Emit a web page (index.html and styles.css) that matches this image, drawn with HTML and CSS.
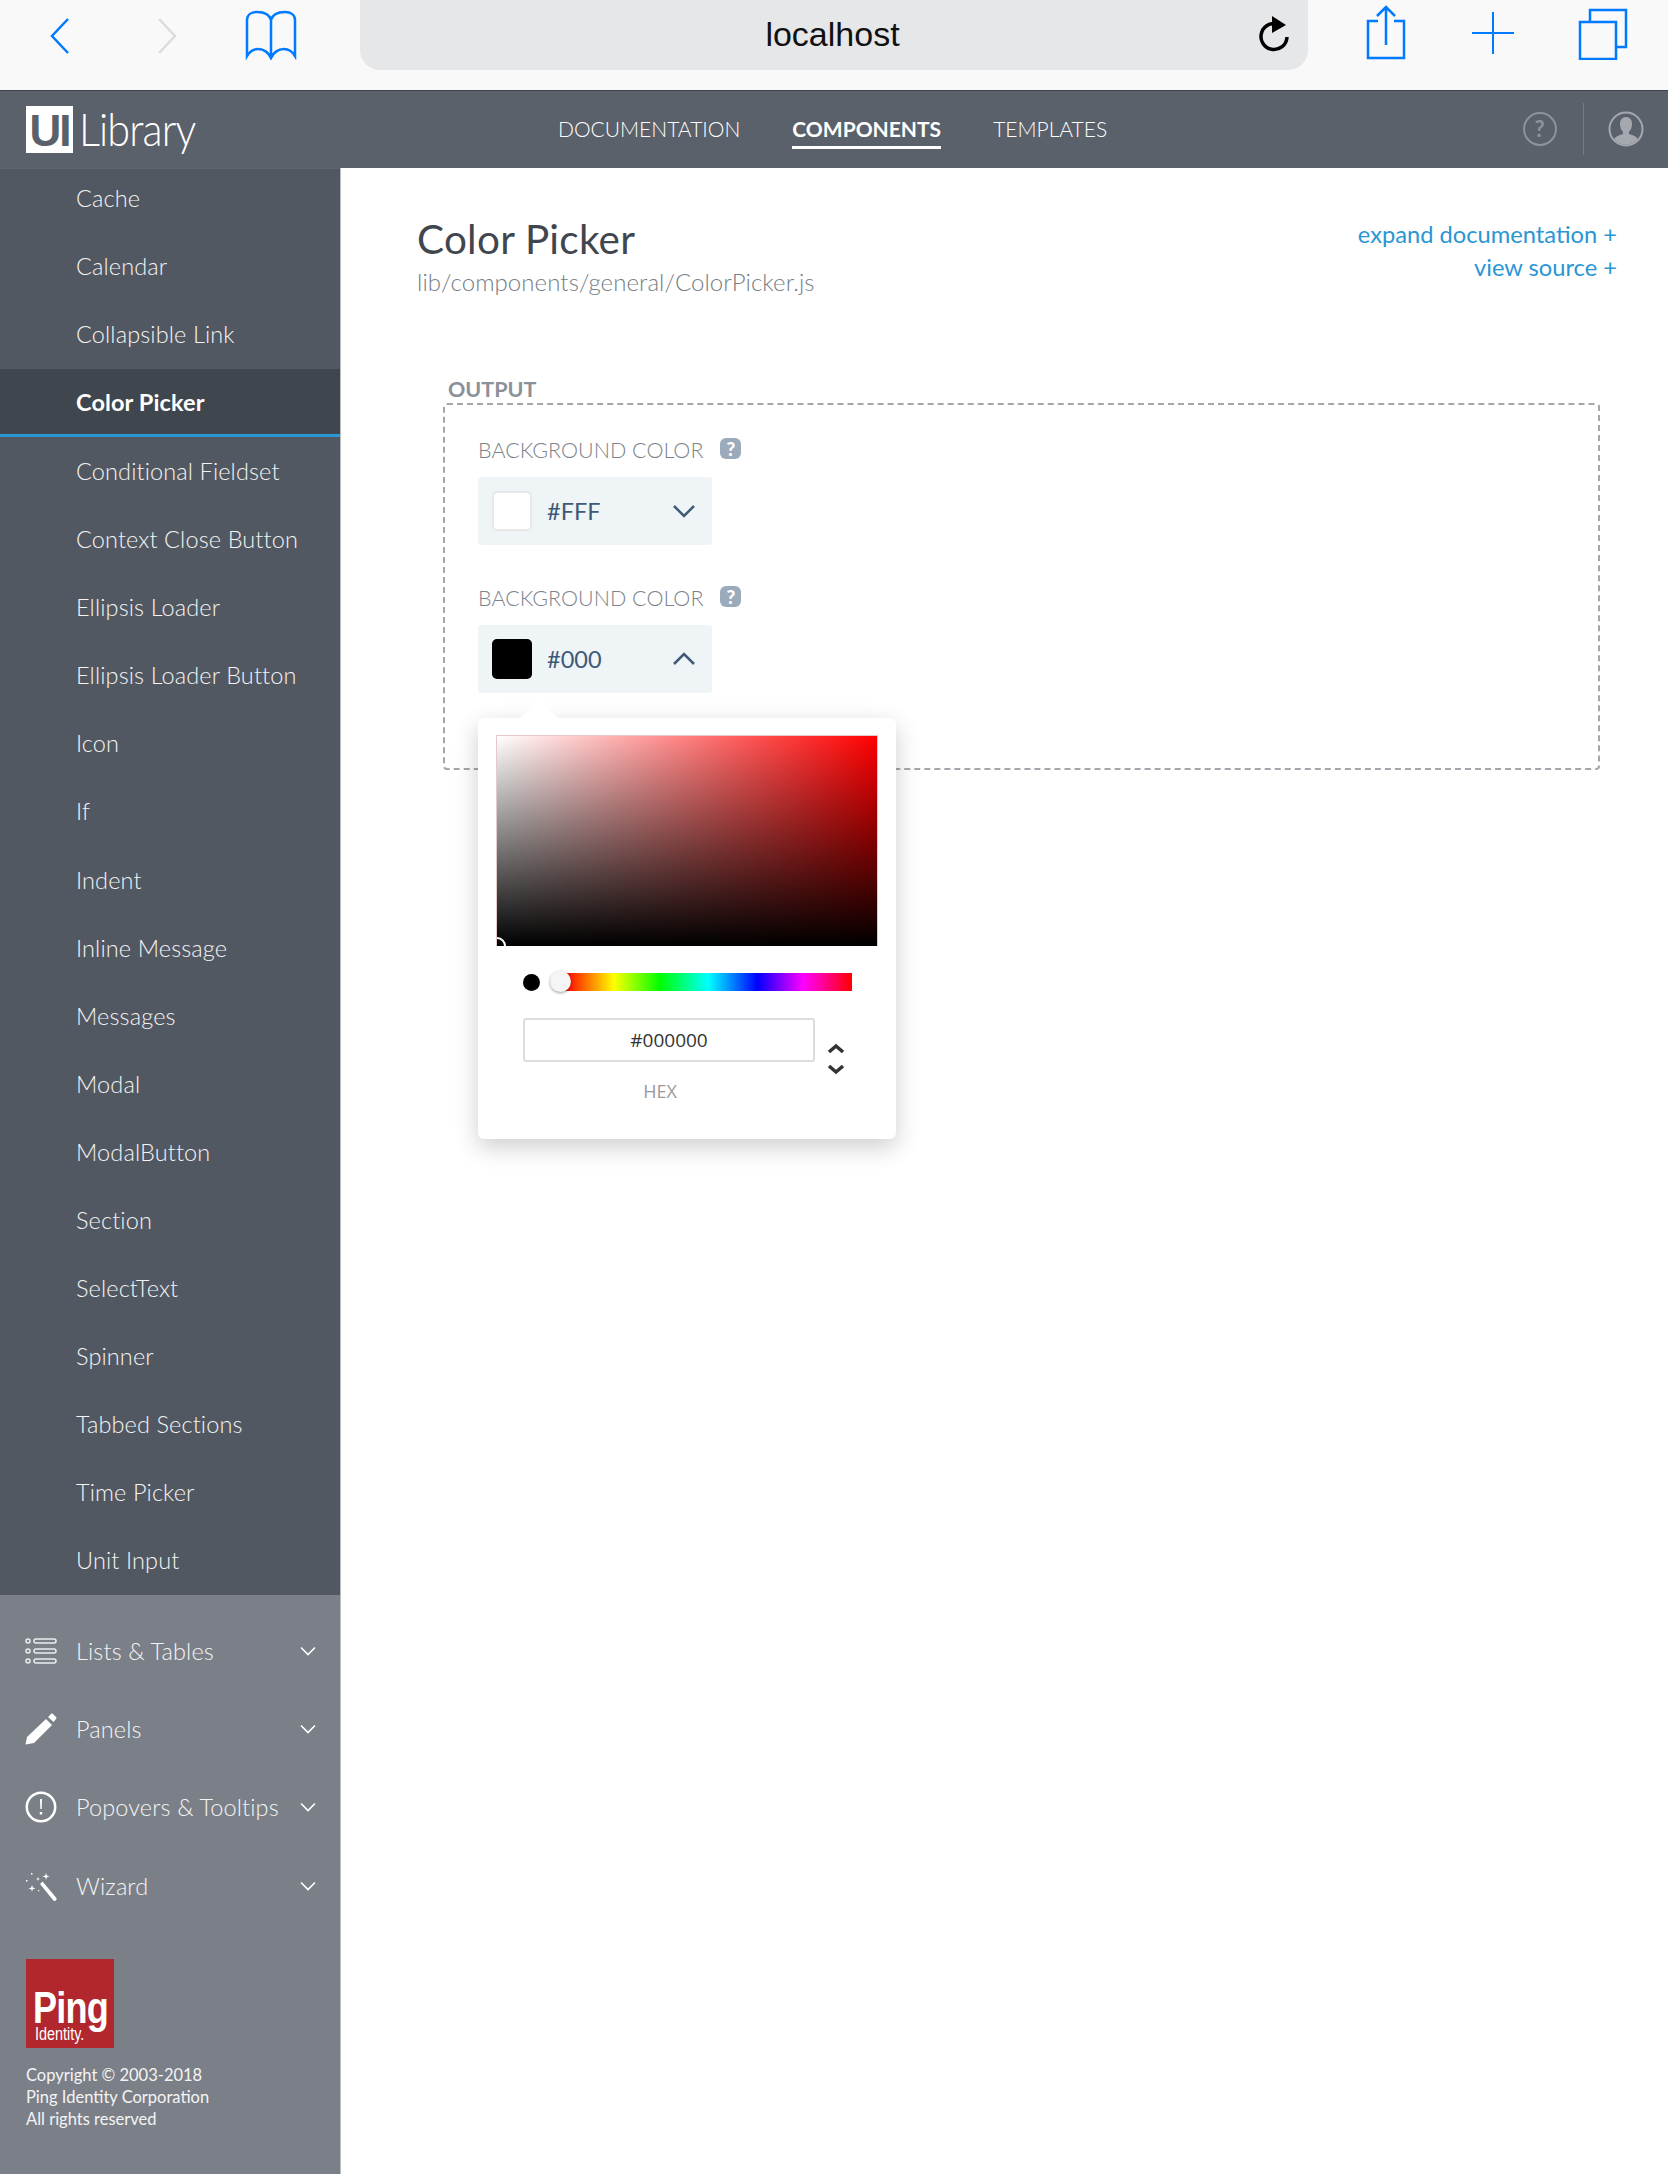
FILE: index.html
```html
<!DOCTYPE html>
<html>
<head>
	<title>UI Library - Color Picker</title>
	<link rel="stylesheet" href="styles.css">
</head>
<body>
<!-- browser toolbar -->
<div class="toolbar">
	<svg class="tb-back" width="22" height="38" viewBox="0 0 22 38"><path d="M19 2 3 19l16 17" /></svg>
	<svg class="tb-forward" width="22" height="38" viewBox="0 0 22 38"><path d="M3 2l16 17L3 36" /></svg>
	<svg class="tb-book" width="52" height="50" viewBox="0 0 52 50"><path d="M26 10C24 3 17 2 12 2 6 2 2 5 2 10v36c3-5 7-7 11-7 6 0 11 4 13 9 2-5 7-9 13-9 4 0 8 2 11 7V10c0-5-4-8-10-8-5 0-12 1-14 8zm0 0v38" /></svg>
	<div class="urlbar">
		<span class="url-text">localhost</span>
		<svg class="url-reload" width="32" height="38" viewBox="0 0 32 38"><path class="reload-arc" d="M23 11a13 13 0 1 0 7 12" /><path class="reload-head" d="M15 2l14 9-14 8z" /></svg>
	</div>
	<svg class="tb-share" width="40" height="56" viewBox="0 0 40 56"><path d="M12 17H2v37h36V17H28M20 41V3M11 12l9-9 9 9" /></svg>
	<svg class="tb-plus" width="44" height="44" viewBox="0 0 44 44"><path d="M22 1v42M1 22h42" /></svg>
	<svg class="tb-tabs" width="50" height="52" viewBox="0 0 50 52"><path d="M2 14h36v37H2zM12 14V2h36v37h-10" /></svg>
</div>

<!-- app header -->
<header class="appbar">
	<div class="brand">
		<span class="brand-mark">UI</span>
		<span class="brand-name">Library</span>
	</div>
	<nav class="topnav">
		<a class="topnav-link">DOCUMENTATION</a>
		<a class="topnav-link is-active">COMPONENTS</a>
		<a class="topnav-link">TEMPLATES</a>
	</nav>
	<div class="appbar-tools">
		<span class="help-circle">?</span>
		<span class="tools-divider"></span>
		<svg class="user-circle" width="36" height="36" viewBox="0 0 36 36"><circle class="user-ring" cx="18" cy="18" r="16.5" /><path class="user-body" d="M18 6c4 0 6 3 6 7 0 3-1 6-3 8v2c3 1 7 2 9 5a15.500 15.500 0 0 1-24 0c2-3 6-4 9-5v-2c-2-2-3-5-3-8 0-4 2-7 6-7z" /></svg>
	</div>
</header>

<div class="layout">
	<aside class="sidebar">
		<ul class="side-list">
			<li class="side-item is-first">Cache</li>
			<li class="side-item">Calendar</li>
			<li class="side-item">Collapsible Link</li>
			<li class="side-item is-active">Color Picker</li>
			<li class="side-item">Conditional Fieldset</li>
			<li class="side-item">Context Close Button</li>
			<li class="side-item">Ellipsis Loader</li>
			<li class="side-item">Ellipsis Loader Button</li>
			<li class="side-item">Icon</li>
			<li class="side-item">If</li>
			<li class="side-item">Indent</li>
			<li class="side-item">Inline Message</li>
			<li class="side-item">Messages</li>
			<li class="side-item">Modal</li>
			<li class="side-item">ModalButton</li>
			<li class="side-item">Section</li>
			<li class="side-item">SelectText</li>
			<li class="side-item">Spinner</li>
			<li class="side-item">Tabbed Sections</li>
			<li class="side-item">Time Picker</li>
			<li class="side-item">Unit Input</li>
		</ul>
		<div class="side-groups">
			<div class="group">
				<svg class="group-icon" width="32" height="26" viewBox="0 0 32 26"><g class="icon-line"><circle cx="3" cy="3" r="2" /><circle cx="3" cy="13" r="2" /><circle cx="3" cy="23" r="2" /><rect x="9" y="1" width="22" height="4" rx="2" /><rect x="9" y="11" width="22" height="4" rx="2" /><rect x="9" y="21" width="22" height="4" rx="2" /></g></svg>
				<span class="group-name">Lists &amp; Tables</span>
				<svg class="group-caret" width="16" height="10" viewBox="0 0 16 10"><path d="M1 1.500l7 7 7-7" /></svg>
			</div>
			<div class="group">
				<svg class="group-icon" width="32" height="32" viewBox="0 0 32 32"><path class="icon-fill" d="M21 6l6 6L9 30 .500 31.500 2 24zM23 4l3-3c.6-.6 1.400-.6 2 0l3 3c.6.6.6 1.400 0 2l-2.500 3z" /></svg>
				<span class="group-name">Panels</span>
				<svg class="group-caret" width="16" height="10" viewBox="0 0 16 10"><path d="M1 1.500l7 7 7-7" /></svg>
			</div>
			<div class="group">
				<svg class="group-icon" width="32" height="32" viewBox="0 0 32 32"><circle class="icon-ring" cx="16" cy="16" r="14.200" /><path class="icon-fill" d="M15 8h2l-.3 10h-1.400zM14.800 21h2.400v2.600h-2.400z" /></svg>
				<span class="group-name">Popovers &amp; Tooltips</span>
				<svg class="group-caret" width="16" height="10" viewBox="0 0 16 10"><path d="M1 1.500l7 7 7-7" /></svg>
			</div>
			<div class="group">
				<svg class="group-icon" width="32" height="32" viewBox="0 0 32 32"><path class="icon-fill" d="M15 14l2.500-2.500 13.500 16c.8 1 .8 2 0 2.800-.8.800-1.800.8-2.800 0zM21 3l.8 2.600 2.700.8-2.700.8-.8 2.600-.8-2.600-2.700-.8 2.700-.8zM7 15l.8 2.600 2.700.8-2.700.8-.8 2.600-.8-2.600-2.700-.8 2.700-.8zM13 7l.5 1.500 1.500.5-1.500.5-.5 1.500-.5-1.500-1.500-.5 1.500-.5zM6 3h1.500v1.500H6zM1 10h1.500v1.500H1zM13 20h1.200v1.200H13z" /></svg>
				<span class="group-name">Wizard</span>
				<svg class="group-caret" width="16" height="10" viewBox="0 0 16 10"><path d="M1 1.500l7 7 7-7" /></svg>
			</div>
		</div>
		<div class="side-footer">
			<div class="ping-logo">
				<span class="ping-word">Ping</span>
				<span class="ping-sub">Identity.</span>
			</div>
			<p class="copyright">Copyright © 2003-2018<br>Ping Identity Corporation<br>All rights reserved</p>
		</div>
	</aside>

	<main class="content">
		<div class="page-head">
			<div>
				<h1 class="page-title">Color Picker</h1>
				<div class="page-path">lib/components/general/ColorPicker.js</div>
			</div>
			<div class="page-links">
				<a>expand documentation +</a>
				<a>view source +</a>
			</div>
		</div>

		<div class="output-label">OUTPUT</div>
		<div class="output-box">
			<div class="field">
				<div class="field-label">BACKGROUND COLOR <span class="help-badge">?</span></div>
				<div class="color-select">
					<span class="swatch swatch-white"></span>
					<span class="color-value">#FFF</span>
					<svg class="select-caret" width="22" height="14" viewBox="0 0 22 14"><path d="M1 2l10 10L21 2" /></svg>
				</div>
			</div>
			<div class="field field-open">
				<div class="field-label">BACKGROUND COLOR <span class="help-badge">?</span></div>
				<div class="color-select">
					<span class="swatch swatch-black"></span>
					<span class="color-value">#000</span>
					<svg class="select-caret" width="22" height="14" viewBox="0 0 22 14"><path d="M1 12 11 2l10 10" /></svg>
				</div>
				<!-- popover hangs over the dashed box -->
				<div class="picker">
					<div class="sv-box"><span class="sv-handle"></span></div>
					<div class="hue-row">
						<span class="hue-dot"></span>
						<div class="hue-bar"><span class="hue-knob"></span></div>
					</div>
					<div class="hex-row">
						<div class="hex-col">
							<div class="hex-input">#000000</div>
							<div class="hex-label">HEX</div>
						</div>
						<svg class="hex-arrows" width="18" height="32" viewBox="0 0 18 32"><path d="M2 9l7-6 7 6M2 23l7 6 7-6" /></svg>
					</div>
				</div>
			</div>
		</div>
	</main>
</div>
</body>
</html>
```

FILE: styles.css
```css
* {
	box-sizing: border-box;
}
html, body {
	margin: 0;
	padding: 0;
}
body {
	width: 1668px;
	height: 2174px;
	overflow: hidden;
	background: #fff;
	font-family: Lato, "Open Sans", sans-serif;
}

/* browser toolbar */
.toolbar {
	height: 91px;
	background: #f9f9f9;
	border-bottom: 1px solid #3f454c;
	position: relative;
	display: flex;
	align-items: flex-start;
}
.toolbar svg path {
	fill: none;
	stroke: #007aff;
	stroke-width: 2.500;
}
.tb-back {
	margin: 17px 0 0 49px;
}
.toolbar .tb-forward {
	margin: 17px 0 0 85px;
}
.toolbar .tb-forward path {
	stroke: #dcdcdc;
}
.tb-book {
	margin: 10px 0 0 67px;
}
.urlbar {
	width: 948px;
	height: 70px;
	margin-left: 63px;
	padding-right: 3px;
	background: #e6e7e9;
	border-radius: 0 0 20px 20px;
	display: flex;
	align-items: center;
	justify-content: center;
	position: relative;
}
.url-text {
	font: 34px "Liberation Sans", sans-serif;
	color: #111;
	margin-top: -1px;
}
.url-reload {
	position: absolute;
	left: 897px;
	top: 14px;
}
.toolbar .reload-arc {
	stroke: #000;
	stroke-width: 3.500;
}
.toolbar .reload-head {
	fill: #000;
	stroke: none;
}
.tb-share {
	margin: 4px 0 0 58px;
}
.tb-plus {
	margin: 11px 0 0 65px;
}
.toolbar .tb-plus path {
	stroke-width: 2;
}
.tb-tabs {
	margin: 8px 0 0 63px;
}

/* app header */
.appbar {
	height: 77px;
	background: #5a616a;
	display: flex;
	align-items: center;
	position: relative;
}
.brand {
	display: flex;
	align-items: center;
	margin-left: 26px;
	width: 532px;
}
.brand-mark {
	width: 47px;
	height: 47px;
	background: #fff;
	color: #5a616a;
	font: bold 44px/49px "Liberation Sans", sans-serif;
	letter-spacing: -2px;
	text-align: center;
}
.brand-name {
	color: #fff;
	font-size: 46px;
	font-weight: 300;
	margin: -2px 0 0 6px;
	letter-spacing: -1px;
	transform: scaleX(.9);
	transform-origin: left center;
}
.topnav {
	display: flex;
	gap: 52px;
	height: 100%;
	align-items: center;
}
.topnav-link {
	font-size: 21px;
	font-weight: 300;
	color: #fff;
	padding: 5px 0;
	border-bottom: 3px solid transparent;
	margin-top: 1px;
}
.topnav-link.is-active {
	font-weight: 700;
	border-bottom-color: #fff;
}
.appbar-tools {
	margin: -2px 24.500px 0 auto;
	display: flex;
	align-items: center;
	gap: 0;
}
.help-circle {
	width: 34px;
	height: 34px;
	border: 2px solid #8d939a;
	border-radius: 50%;
	color: #8d939a;
	font-size: 22px;
	font-weight: 700;
	text-align: center;
	line-height: 30px;
}
.tools-divider {
	width: 1px;
	height: 52px;
	background: #767c84;
	margin: 0 24px 0 26px;
}
.user-ring {
	fill: none;
	stroke: #a5a9af;
	stroke-width: 2;
}
.user-body {
	fill: #a5a9af;
}

/* sidebar + page */
.layout {
	display: grid;
	grid-template-columns: 341px 1fr;
	height: 2006px;
}
.sidebar {
	background: #7b8088;
	border-right: 1px solid #b9bcc0;
	display: flex;
	flex-direction: column;
}
.side-list {
	list-style: none;
	margin: 0;
	padding: 0;
	background: #525861;
	box-shadow: inset 0 1px 0 #5f656d;
}
.side-item {
	height: 68.100px;
	padding: 20px 0 0 76px;
	font-size: 23.500px;
	letter-spacing: .12px;
	font-weight: 300;
	color: #f4f4f4;
}
.side-item.is-first {
	height: 64px;
	padding-top: 16px;
}
.side-item.is-active {
	height: 68px;
	margin-top: .8px;
	padding-top: 19px;
	background: #3f464e;
	border-bottom: 3px solid #2a96d4;
	font-weight: 700;
	color: #fff;
}
.side-groups {
	padding-top: 17px;
}
.group {
	height: 78.300px;
	display: flex;
	align-items: center;
	padding-left: 25px;
	padding-right: 24px;
	color: #f4f4f4;
}
.group-icon {
	width: 32px;
	flex: none;
}
.group-name {
	margin-left: 19px;
	font-size: 23.500px;
	letter-spacing: .12px;
	font-weight: 300;
	flex: 1;
}
.group-caret path {
	fill: none;
	stroke: #fff;
	stroke-width: 1.600;
}
.icon-line {
	fill: none;
	stroke: #eceded;
	stroke-width: 1.500;
}
.icon-fill {
	fill: #fff;
}
.icon-ring {
	fill: none;
	stroke: #fff;
	stroke-width: 2.500;
}
.side-footer {
	padding: 34px 0 0 26px;
}
.ping-logo {
	width: 88px;
	height: 89px;
	background: #b2272d;
	color: #fff;
	position: relative;
	overflow: hidden;
	font-family: "Liberation Sans", sans-serif;
}
.ping-word {
	position: absolute;
	left: 7px;
	top: 35px;
	font-size: 44px;
	line-height: 28px;
	font-weight: 700;
	letter-spacing: -1px;
	transform: scaleX(.82);
	transform-origin: left top;
}
.ping-sub {
	position: absolute;
	left: 9px;
	top: 68px;
	font-size: 18px;
	line-height: 14px;
	transform: scaleX(.8);
	transform-origin: left top;
}
.copyright {
	margin: 16px 0 0;
	color: #f4f4f4;
	font-size: 16.500px;
	line-height: 22px;
}

/* main content */
.content {
	padding: 47px 51px 0 76px;
}
.page-head {
	display: flex;
	justify-content: space-between;
	align-items: flex-start;
}
.page-title {
	margin: 0;
	font-size: 40.500px;
	letter-spacing: .25px;
	line-height: 48px;
	font-weight: 400;
	color: #3f464e;
}
.page-path {
	font-size: 24px;
	letter-spacing: .08px;
	font-weight: 300;
	color: #767c84;
	margin-top: 4px;
}
.page-links {
	display: flex;
	flex-direction: column;
	align-items: flex-end;
	gap: 5px;
	margin-top: 5px;
	font-size: 23.700px;
	color: #2a96d4;
}
.output-label {
	margin: 80px 0 0 31px;
	font-size: 21.500px;
	line-height: 26px;
	font-weight: 700;
	color: #8b9199;
}
.output-box {
	width: 1157px;
	height: 367px;
	margin: 1px 0 0 26px;
	padding: 32px 33px 0;
	border: 2px dashed #a3a7ac;
	border-radius: 4px;
}
.field {
	position: relative;
	margin-bottom: 40px;
}
.field-label {
	display: flex;
	align-items: center;
	gap: 17px;
	height: 26px;
	margin-bottom: 14px;
	font-size: 21.500px;
	font-weight: 300;
	color: #7d838b;
}
.help-badge {
	width: 21px;
	height: 21px;
	border-radius: 6px;
	background: #9cabbc;
	color: #fff;
	font-size: 19px;
	font-weight: 900;
	line-height: 21px;
	text-align: center;
	margin-top: -3px;
}
.color-select {
	width: 234px;
	height: 68px;
	background: #eff4f7;
	border-radius: 3px;
	display: flex;
	align-items: center;
	padding: 0 17px 0 14px;
}
.swatch {
	width: 40px;
	height: 40px;
	border-radius: 5px;
}
.swatch-white {
	background: #fff;
	border: 2px solid #e8e8e8;
}
.swatch-black {
	background: #000;
}
.color-value {
	margin-left: 15px;
	font-size: 23.500px;
	font-weight: 400;
	color: #3e5a76;
	flex: 1;
}
.select-caret path {
	fill: none;
	stroke: #3e5a76;
	stroke-width: 2.500;
}

/* the popover */
.picker {
	position: absolute;
	left: 0;
	top: 133px;
	width: 418px;
	height: 421px;
	padding: 17px 18px;
	background: #fff;
	border-radius: 6px;
	box-shadow: 0 8px 24px rgba(0, 0, 0, .2);
	z-index: 2;
}
.picker::before {
	content: "";
	position: absolute;
	left: 42px;
	top: -18px;
	border: solid transparent;
	border-width: 0 19px 18px;
	border-bottom-color: #fff;
}
.sv-box {
	height: 211px;
	position: relative;
	overflow: hidden;
	border: 1px solid #e6c9c9;
	border-bottom: 0;
	background:
		linear-gradient(to top, #000, transparent),
		linear-gradient(to right, #fff, #f00);
}
.sv-handle {
	position: absolute;
	left: -9px;
	bottom: -9px;
	width: 18px;
	height: 18px;
	border: 2px solid #fff;
	border-radius: 50%;
}
.hue-row {
	display: flex;
	align-items: center;
	margin: 27px 0 0 27px;
	height: 18px;
}
.hue-dot {
	width: 17px;
	height: 17px;
	border-radius: 50%;
	background: #000;
	flex: none;
}
.hue-bar {
	width: 287px;
	height: 18px;
	margin-left: 25px;
	position: relative;
	background: linear-gradient(to right, #f00 0%, #ff0 17%, #0f0 33%, #0ff 50%, #00f 67%, #f0f 83%, #f00 100%);
}
.hue-knob {
	position: absolute;
	left: -15px;
	top: -2px;
	width: 21px;
	height: 21px;
	border-radius: 50%;
	background: #f5f5f5;
	box-shadow: 0 1px 3px rgba(0, 0, 0, .4);
}
.hex-row {
	display: flex;
	margin: 27px 0 0 27px;
}
.hex-col {
	width: 292px;
}
.hex-input {
	height: 44px;
	border: 2px solid #ddd;
	border-radius: 3px;
	font: 19px/40px "Open Sans", sans-serif;
	color: #333;
	text-align: center;
}
.hex-label {
	margin-top: 18px;
	padding-right: 18px;
	font: 18px/22px "Open Sans", sans-serif;
	color: #999;
	text-align: center;
}
.hex-arrows {
	margin: 25px 0 0 12px;
}
.hex-arrows path {
	fill: none;
	stroke: #333;
	stroke-width: 3.500;
}
```
